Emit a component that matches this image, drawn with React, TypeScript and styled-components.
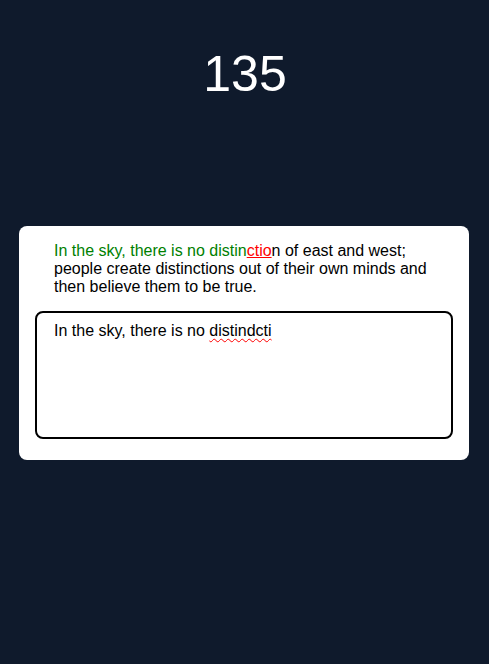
import React from "react";
import styled, { createGlobalStyle } from "styled-components";

const Global = createGlobalStyle`
  html, body { margin: 0; padding: 0; background: #0f1a2c; }
  body { font-family: "Liberation Sans", Arial, sans-serif; }
`;

const Page = styled.main`
  min-height: 100vh;
  display: flex;
  flex-direction: column;
  align-items: center;
  padding: 45px 20px 0 19px;
  box-sizing: border-box;
`;

const Counter = styled.h1`
  margin: 0 0 0 2px;
  color: #ffffff;
  font-family: "Liberation Sans", Arial, sans-serif;
  font-weight: 400;
  font-size: 50px;
  line-height: 58px;
  text-align: center;
`;

const Card = styled.section`
  margin-top: 123px;
  width: 450px;
  box-sizing: border-box;
  background: #ffffff;
  border-radius: 8px;
  padding: 16px 16px 21px;
  display: flex;
  flex-direction: column;
  gap: 15px;
`;

const Passage = styled.p`
  margin: 0;
  padding: 0 19px;
  font-size: 16px;
  line-height: 18px;
  color: #000000;
`;

const Seg = styled.span<{ $state: "correct" | "wrong" | "pending" }>`
  color: ${(p) =>
    p.$state === "correct" ? "#008000" : p.$state === "wrong" ? "#ff0000" : "#000000"};
  text-decoration: ${(p) => (p.$state === "wrong" ? "underline" : "none")};
  text-decoration-color: #ff0000;
`;

const TypingBox = styled.div`
  height: 128px;
  box-sizing: border-box;
  border: 2px solid #000000;
  border-radius: 8px;
  padding: 9px 17px;
  font-size: 16px;
  line-height: 18px;
  color: #000000;
`;

const Misspelled = styled.span`
  text-decoration: underline wavy #ff0000;
  text-decoration-thickness: 1px;
  text-underline-offset: 2px;
`;

export default function App() {
  return (
    <>
      <Global />
      <Page>
        <Counter>135</Counter>
        <Card>
          <Passage>
            <Seg $state="correct">In the sky, there is no distin</Seg>
            <Seg $state="wrong">ctio</Seg>
            <Seg $state="pending">
              n of east and west; people create distinctions out of their own minds and then
              believe them to be true.
            </Seg>
          </Passage>
          <TypingBox role="textbox" aria-multiline="true">
            In the sky, there is no <Misspelled>distindcti</Misspelled>
          </TypingBox>
        </Card>
      </Page>
    </>
  );
}
